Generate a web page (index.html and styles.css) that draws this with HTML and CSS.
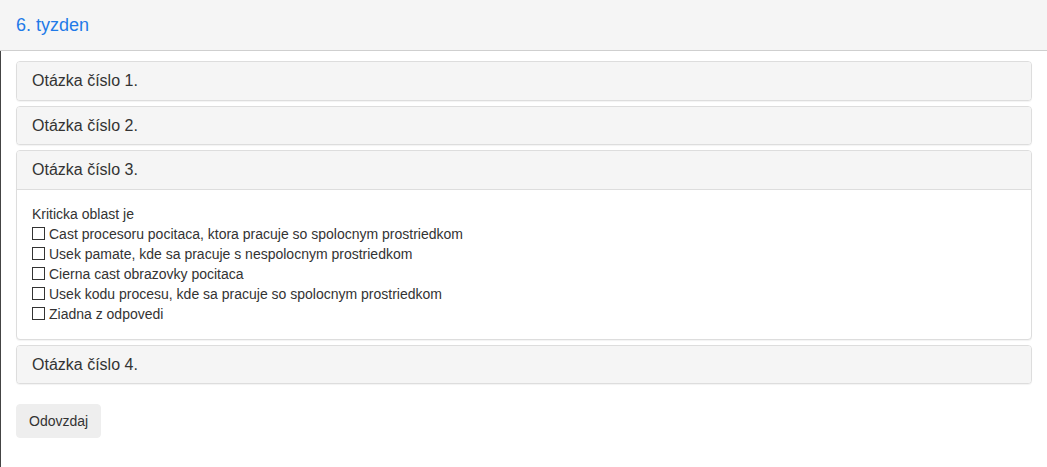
FILE: index.html
```html
<!DOCTYPE html>
<html>
<head>
<meta charset="utf-8">
<link rel="stylesheet" href="styles.css">
</head>
<body>
<header class="topbar"><span class="title">6. tyzden</span></header>
<main class="content">
  <div class="panel-group">
    <div class="panel"><div class="panel-heading">Otázka číslo 1.</div></div>
    <div class="panel"><div class="panel-heading">Otázka číslo 2.</div></div>
    <div class="panel">
      <div class="panel-heading">Otázka číslo 3.</div>
      <div class="panel-body">
        <div class="line">Kriticka oblast je</div>
        <label class="line"><input type="checkbox" class="cb">Cast procesoru pocitaca, ktora pracuje so spolocnym prostriedkom</label>
        <label class="line"><input type="checkbox" class="cb">Usek pamate, kde sa pracuje s nespolocnym prostriedkom</label>
        <label class="line"><input type="checkbox" class="cb">Cierna cast obrazovky pocitaca</label>
        <label class="line"><input type="checkbox" class="cb">Usek kodu procesu, kde sa pracuje so spolocnym prostriedkom</label>
        <label class="line"><input type="checkbox" class="cb">Ziadna z odpovedi</label>
      </div>
    </div>
    <div class="panel"><div class="panel-heading">Otázka číslo 4.</div></div>
  </div>
  <button class="btn">Odovzdaj</button>
</main>
</body>
</html>
```
FILE: styles.css
```css
html, body {
  margin: 0;
  padding: 0;
  height: 100%;
  background: #fff;
  font-family: "Liberation Sans", Arial, sans-serif;
  font-size: 14px;
  color: #333;
}
body {
  display: flex;
  flex-direction: column;
}
.topbar {
  height: 50px;
  line-height: 50px;
  background: #f5f5f5;
  border-bottom: 1px solid #cfcfcf;
  padding: 0 16px;
}
.title {
  font-size: 18px;
  color: #1f7ae8;
}
.content {
  flex: 1;
  border-left: 1px solid #444;
  padding: 10px 15px 0 15px;
}
.panel-group {
  display: flex;
  flex-direction: column;
  gap: 5px;
  margin-bottom: 20px;
}
.panel {
  border: 1px solid #ddd;
  border-radius: 4px;
  background: #fff;
  box-shadow: 0 1px 1px rgba(0,0,0,0.05);
  overflow: hidden;
}
.panel-heading {
  background: #f5f5f5;
  padding: 10px 15px;
  font-size: 16px;
  line-height: 17.6px;
  color: #333;
}
.panel-body {
  border-top: 1px solid #ddd;
  padding: 14px 15px 15px 15px;
  line-height: 20px;
}
.line {
  display: flex;
  align-items: center;
  height: 20px;
}
.cb {
  appearance: none;
  -webkit-appearance: none;
  width: 13px;
  height: 13px;
  margin: 0 4px 0 0;
  border: 1px solid #333;
  background: #fff;
  box-sizing: border-box;
}
.btn {
  font-family: "Liberation Sans", Arial, sans-serif;
  font-size: 14px;
  line-height: 20px;
  color: #333;
  background: #eee;
  border: 1px solid #eee;
  border-radius: 4px;
  padding: 6px 12px;
  width: 85px;
}
```
